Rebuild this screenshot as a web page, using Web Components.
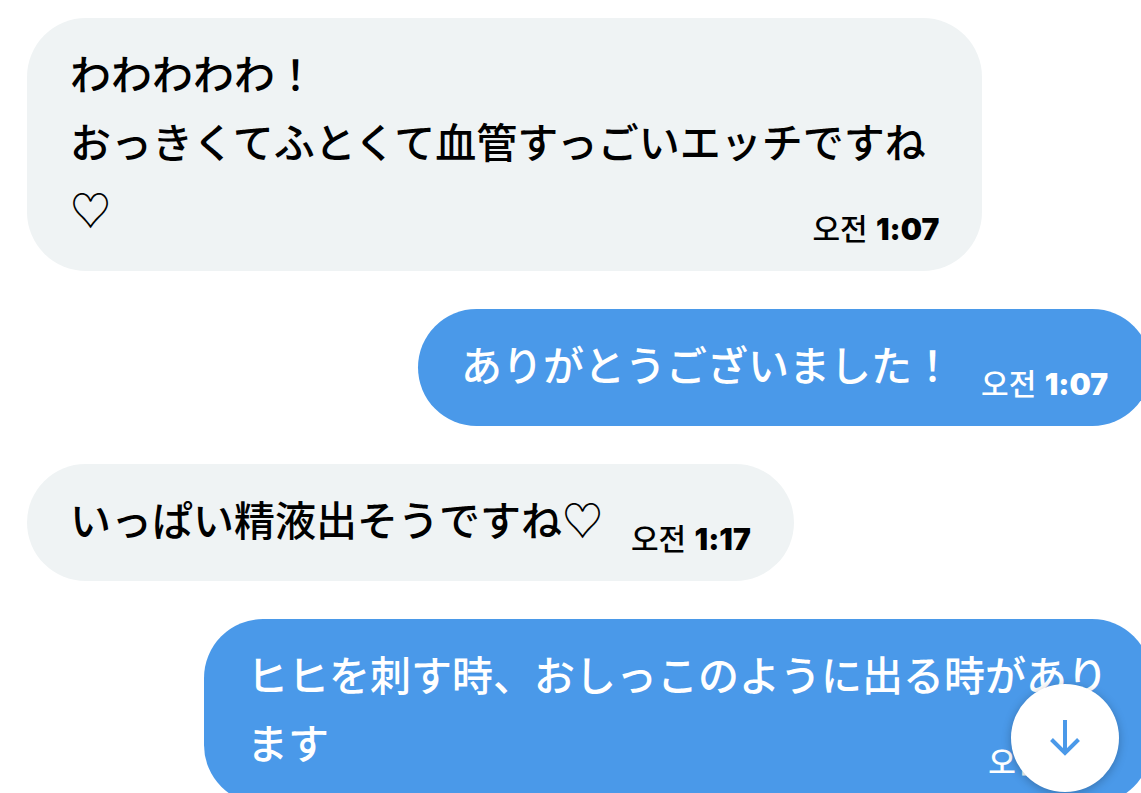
<!DOCTYPE html>
<html lang="ja">
<head>
<meta charset="utf-8">
<meta name="viewport" content="width=device-width, initial-scale=1">
<title>Messages</title>
<style>
  body { margin: 0; background: #fff; }
</style>
</head>
<body>
<chat-thread>
  <chat-message><span>わわわわわ！</span><br><span>おっきくてふとくて血管すっごいエッチですね</span><wbr><span>♡</span><message-time slot="time" value="1:07"></message-time></chat-message>
  <chat-message outgoing><span>ありがとうございました！</span><message-time slot="time" value="1:07"></message-time></chat-message>
  <chat-message><span>いっぱい精液出そうですね♡</span><message-time slot="time" value="1:17"></message-time></chat-message>
  <chat-message outgoing><span>ヒヒを刺す時、おしっこのように出る時があり</span><br><span>ます</span><message-time slot="time" value="1:17"></message-time></chat-message>
  <scroll-button slot="overlay"></scroll-button>
</chat-thread>

<script>
class ChatThread extends HTMLElement {
  constructor() {
    super();
    this.attachShadow({ mode: 'open' }).innerHTML = `
      <style>
        :host { display: block; position: relative; height: 100vh; overflow: hidden; }
        .list { display: flex; flex-direction: column; gap: 38px; margin-right: -10px; padding: 18px 0 0 27px; }
      </style>
      <div class="list"><slot></slot></div>
      <slot name="overlay"></slot>`;
  }
}

class ChatMessage extends HTMLElement {
  constructor() {
    super();
    this.attachShadow({ mode: 'open' }).innerHTML = `
      <style>
        :host {
          display: flow-root; align-self: flex-start; box-sizing: border-box;
          width: fit-content; max-width: 85%; padding: 20px 43px 29px;
          border-radius: 59px; background: #eff3f4; color: #000;
          font: 500 41px/68px "Noto Sans CJK JP", sans-serif;
        }
        :host([outgoing]) { align-self: flex-end; background: #4a99e9; color: #fff; }
      </style>
      <slot></slot><slot name="time"></slot>`;
  }
}

class MessageTime extends HTMLElement {
  constructor() {
    super();
    this.attachShadow({ mode: 'open' }).innerHTML = `
      <style>
        :host {
          display: block; float: right; margin: 38px 0 0 28px;
          font: 500 30px/30px "Noto Sans CJK KR", sans-serif;
          white-space: nowrap;
        }
        time { display: block; height: 30px; }
        b { font: 900 30px/30px Inter, sans-serif; }
      </style>
      <time lang="ko">오전 <b></b></time>`;
  }
  connectedCallback() {
    this.shadowRoot.querySelector('b').textContent = this.getAttribute('value');
  }
}

class ScrollButton extends HTMLElement {
  constructor() {
    super();
    this.attachShadow({ mode: 'open' }).innerHTML = `
      <style>
        :host { display: block; position: absolute; right: 22px; bottom: 1px; }
        button {
          display: grid; place-items: center; width: 108px; height: 108px; padding: 0;
          border: 0; border-radius: 50%; background: #fff; color: #4a99e9; cursor: pointer;
          box-shadow: 0 2px 10px rgba(0, 0, 0, .25);
        }
        svg { display: block; }
      </style>
      <button type="button" aria-label="Scroll to latest">
        <svg width="36" height="36" viewBox="0 0 36 36" fill="none" stroke="currentColor" stroke-width="4" aria-hidden="true">
          <path d="M18 0V33M4.500 19.500 18 33 31.500 19.500"/>
        </svg>
      </button>`;
  }
}

customElements.define('chat-thread', ChatThread);
customElements.define('chat-message', ChatMessage);
customElements.define('message-time', MessageTime);
customElements.define('scroll-button', ScrollButton);
</script>
</body>
</html>
